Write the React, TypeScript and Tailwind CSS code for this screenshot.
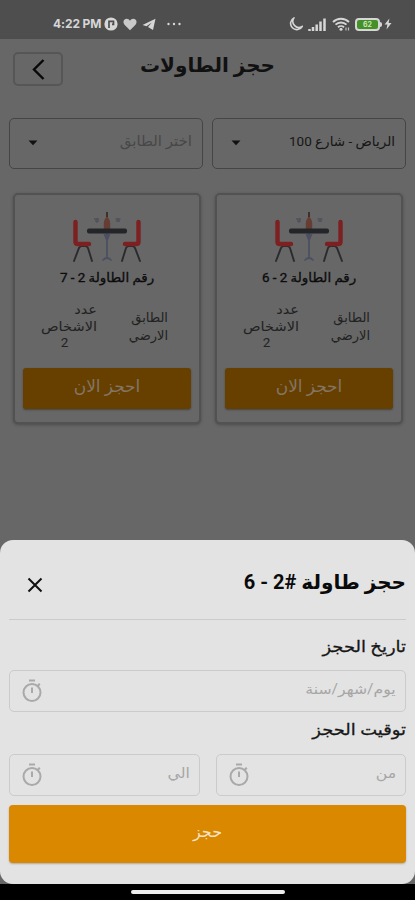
import { useState } from 'react'
import type { ReactNode } from 'react'

interface Table {
  id: string
  name: string
  floor: string[]
  seats: number
}

const TABLES: Table[] = [
  { id: '2-6', name: 'رقم الطاولة 2 - 6', floor: ['الطابق', 'الارضي'], seats: 2 },
  { id: '2-7', name: 'رقم الطاولة 2 - 7', floor: ['الطابق', 'الارضي'], seats: 2 },
]

function StatusBar() {
  return (
    <div dir="ltr" className="flex h-[39px] items-start justify-between bg-[#4e4e4e] pt-[16px] pr-[23px] pl-[53px] text-[#d6d6d6]">
      <div className="flex h-4 items-center">
        <span className="w-[49px] font-['Inter'] text-[12px] leading-4 font-bold tracking-[-0.1px] whitespace-nowrap">4:22 PM</span>
        <svg className="ml-[2px]" width="14" height="14" viewBox="0 0 14 14">
          <circle cx="7" cy="7" r="6.6" fill="#d6d6d6" />
          <path d="M5 11V4.300h4.500v3H8" fill="none" stroke="#4e4e4e" strokeWidth="1.700" />
        </svg>
        <svg className="ml-[5px]" width="14" height="13" viewBox="0 0 14 13">
          <path d="M7 12.300 1.500 6.700C-.8 3.800 1 .7 3.600.7 5.200.7 6.300 1.600 7 2.800 7.700 1.600 8.800.7 10.400.7 13 .7 14.800 3.800 12.500 6.700Z" fill="#c9c9c9" />
        </svg>
        <svg className="ml-[5px]" width="14" height="13" viewBox="0 0 14 13">
          <path d="M13.500.8.500 7l4 1.300 5.300-3.800-3.800 4.500 5 3Z" fill="#d6d6d6" />
        </svg>
        <svg className="ml-[11px]" width="14" height="4" viewBox="0 0 14 4">
          <circle cx="1.500" cy="2" r="1.200" fill="#d6d6d6" />
          <circle cx="7" cy="2" r="1.200" fill="#d6d6d6" />
          <circle cx="12.500" cy="2" r="1.200" fill="#d6d6d6" />
        </svg>
      </div>
      <div className="flex h-4 items-center">
        <svg width="14" height="14" viewBox="0 0 14 14">
          <path d="M5 .9A6.200 6.200 0 1 0 13.300 9.300 6 6 0 0 1 5 .9Z" fill="none" stroke="#d6d6d6" strokeWidth="1.600" strokeLinejoin="round" />
        </svg>
        <svg className="ml-[5px]" width="19" height="13" viewBox="0 0 19 13">
          <path d="M1.500 13v-2M5 13V9M8.700 13V6.500M12.500 13V3.500M16.500 13V.5" stroke="#d6d6d6" strokeWidth="2.500" />
        </svg>
        <svg className="ml-[5px]" width="18" height="14" viewBox="0 0 18 14">
          <path d="M1 5a11.300 11.300 0 0 1 16 0M3.500 7.700a7.800 7.800 0 0 1 11 0M6 10.300a4.300 4.300 0 0 1 6 0" fill="none" stroke="#d6d6d6" strokeWidth="1.900" />
          <circle cx="9" cy="12.300" r="1.500" fill="#d6d6d6" />
          <path d="M14 10.500v3M16.500 10.500v3" stroke="#bbb" strokeWidth="1.200" />
        </svg>
        <div className="ml-[5px] flex h-[13px] w-[25px] items-center justify-center rounded-[4px] border-2 border-[#d6d6d6] bg-[#46902a] font-['Inter'] text-[7px] leading-none font-bold text-[#c8e6b8]">
          62
        </div>
        <div className="h-[5px] w-[2px] rounded-r-sm bg-[#d6d6d6]" />
        <svg className="ml-[2px]" width="8" height="12" viewBox="0 0 8 12">
          <path d="M5.400.5.600 6.600h2.800L2.500 11.500 7.500 5H4.600Z" fill="#d6d6d6" />
        </svg>
      </div>
    </div>
  )
}

function Select({ label, muted }: { label: string; muted?: boolean }) {
  return (
    <button className="flex h-[51px] w-[194px] items-start justify-between rounded-[5px] border border-[#454545] pt-[12px] pr-[10px] pl-[17px]">
      <span className={muted ? 'text-[15px] leading-5 text-[#484848]' : 'text-[13.5px] leading-5 text-[#161616]'}>{label}</span>
      <svg className="mt-[9px]" width="12" height="6" viewBox="0 0 12 6">
        <path d="M1.500.5h9L6 5.300Z" fill="#111" />
      </svg>
    </button>
  )
}

function TableArt() {
  return (
    <svg width="70" height="52" viewBox="0 0 70 52">
      <g fill="none" stroke="#292b2e" strokeWidth="1.900" strokeLinecap="round">
        <path d="M2 50 7 37q1-2 3-2h3q2 0 3 2l4 13M50 50l4-13q1-2 3-2h3q2 0 3 2l5 13" />
      </g>
      <path d="M3.500 11v20q0 2 2.500 2h11M66.500 11v20q0 2-2.500 2H53" fill="none" stroke="#7c2022" strokeWidth="4.400" strokeLinecap="round" />
      <path d="M35 22v25M31 49q4-4 8 0" fill="none" stroke="#4b4f61" strokeWidth="1.700" strokeLinecap="round" />
      <path d="M31.500 23h7L36 29h-2Z" fill="#4b4f61" />
      <path d="M34.200 1h1.600v5q2.400 3 2.400 6v6h-6.400v-6q0-3 2.400-6Z" fill="#663d33" />
      <path d="M34.200 1h1.600v5h-1.600Z" fill="#322c2a" />
      <path d="M22 8h5M23 10h4M25 7v5M43.500 8h5M44 10h4M46 7v4" stroke="#50535c" strokeWidth="1.300" />
      <rect x="15" y="17.500" width="40" height="5" rx="2" fill="#232529" />
    </svg>
  )
}

function TableCard({ table }: { table: Table }) {
  return (
    <div className="flex h-[231px] w-[188px] flex-col items-center rounded-[5px] border-2 border-[#525252] bg-[#676767] px-[8px] pt-[16px] shadow-[0_1px_3px_#4c4c4c]">
      <TableArt />
      <h3 className="mt-[5px] scale-x-[1.07] text-[12.5px] leading-5 font-normal whitespace-nowrap text-[#0c0c0c] [-webkit-text-stroke:0.3px]">
        {table.name}
      </h3>
      <div className="mt-[12px] flex h-[52px] w-full items-center justify-between pr-[23px] pl-[21px] text-[13px] leading-[17px] text-[#222]">
        <div className="pt-[2px] leading-[18px]">
          {table.floor.map((line) => (
            <div key={line} className="whitespace-nowrap">{line}</div>
          ))}
        </div>
        <div className="scale-x-[1.12]">
          <div>عدد</div>
          <div className="whitespace-nowrap">الاشخاص</div>
          <div className="pr-[8px] text-center text-[12px]">{table.seats}</div>
        </div>
      </div>
      <button className="mt-[16px] flex h-[41px] w-[168px] items-center justify-center rounded-[3px] bg-[#674000] pb-[3px] text-[17px] text-[#837565] shadow-[0_1px_2px_#444]">
        احجز الان
      </button>
    </div>
  )
}

function StopwatchIcon() {
  return (
    <svg width="20" height="24" viewBox="0 0 20 24" fill="none" stroke="#a9a9a9" strokeWidth="2">
      <circle cx="10" cy="13.500" r="8.500" />
      <path d="M7 1.500h6M10 8.500V14M15.800 6.700 17.800 4.700" />
    </svg>
  )
}

function Field({ placeholder }: { placeholder: string }) {
  return (
    <div className="flex h-[42px] flex-1 items-center justify-between rounded-[5px] border border-[#cbcbcb] pr-[9px] pl-[12px]">
      <span className="origin-right scale-x-[1.12] pb-[4px] text-[14px] text-[#a6a6a6]">{placeholder}</span>
      <StopwatchIcon />
    </div>
  )
}

function Label({ children }: { children: ReactNode }) {
  return (
    <div className="h-[24px] origin-right scale-x-[1.12] text-[16px] leading-6 text-[#161616] [-webkit-text-stroke:0.3px]">
      {children}
    </div>
  )
}

export default function App() {
  const [tables] = useState(TABLES)

  return (
    <div dir="rtl" className="flex h-[900px] w-[415px] flex-col overflow-hidden bg-[#676767] font-['Roboto','DejaVu_Sans',sans-serif]">
      <StatusBar />
      <main className="h-[501px]">
        <header className="grid h-[79px] grid-cols-[50px_1fr_50px] items-start px-[13px] pt-[13px]">
          <span />
          <h1 className="text-center text-[20px] leading-[27px] font-bold text-[#111]">حجز الطاولات</h1>
          <button className="flex h-[34px] items-center justify-center rounded-[5px] border-2 border-[#565656]">
            <svg width="13" height="21" viewBox="0 0 13 21">
              <path d="M11.500 1 2 10.500l9.500 9.500" fill="none" stroke="#080808" strokeWidth="2.400" />
            </svg>
          </button>
        </header>
        <div className="flex justify-between px-[9px]">
          <Select label="الرياض - شارع 100" />
          <Select label="اختر الطابق" muted />
        </div>
        <div className="mt-[24px] flex justify-between pr-[12px] pl-[13px]">
          {tables.map((table) => (
            <TableCard key={table.id} table={table} />
          ))}
        </div>
      </main>
      <section className="flex h-[344px] flex-col rounded-[13px] bg-[#e3e3e3] px-[9px]">
        <div className="flex h-[80px] items-start justify-between border-b border-[#cbcbcb] pt-[27px] pl-[18px]">
          <h2 className="text-[20px] leading-[30px] font-bold text-[#0a0a0a]">حجز طاولة #2 - 6</h2>
          <svg className="mt-[10px]" width="16" height="16" viewBox="0 0 16 16">
            <path d="m1.500 1.500 13 13m0-13-13 13" stroke="#111" strokeWidth="2" />
          </svg>
        </div>
        <div className="pt-[15px]">
          <Label>تاريخ الحجز</Label>
        </div>
        <div className="mt-[11px] flex">
          <Field placeholder="يوم/شهر/سنة" />
        </div>
        <div className="pt-[6px]">
          <Label>توقيت الحجز</Label>
        </div>
        <div className="mt-[12px] flex gap-[16px]">
          <Field placeholder="من" />
          <Field placeholder="الي" />
        </div>
        <button className="mt-[9px] flex h-[58px] items-center justify-center rounded-[4px] bg-[#d98800] pb-[5px] text-[16px] text-[#f5e3c8] shadow-[0_1px_2px_#aaa]">
          حجز
        </button>
      </section>
      <div className="flex h-4 items-start justify-center bg-black pt-[6px]">
        <div className="h-[4px] w-[154px] rounded-full bg-[#eee]" />
      </div>
    </div>
  )
}
